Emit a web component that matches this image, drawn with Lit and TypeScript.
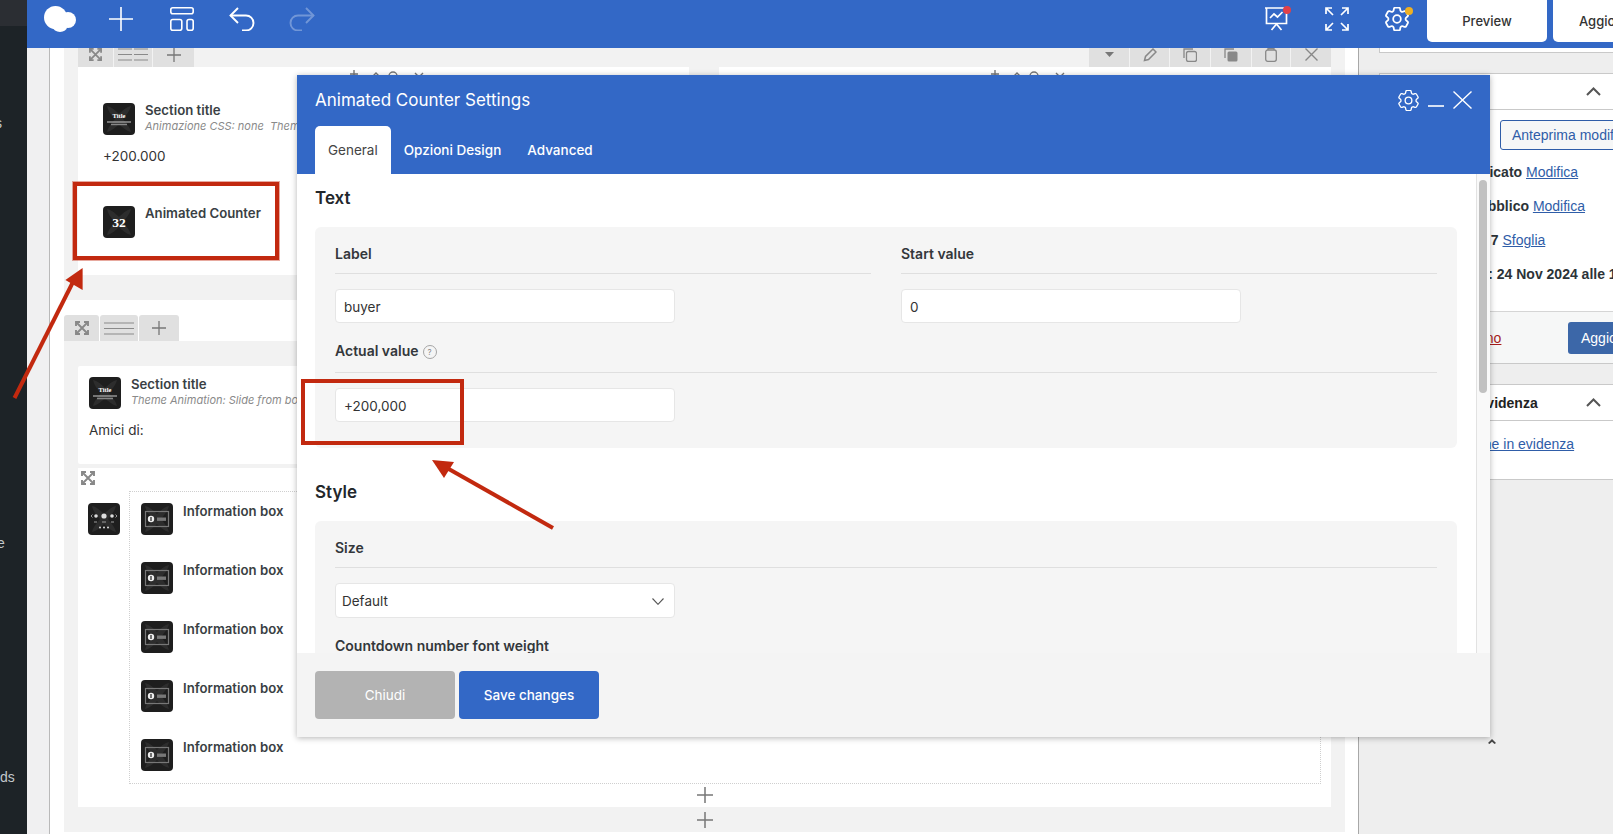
import { LitElement, html, css, svg } from "lit";
import { customElement } from "lit/decorators.js";

const gear = svg`<path d="M9.594 3.94c.09-.542.56-.94 1.11-.94h2.593c.55 0 1.02.398 1.11.94l.213 1.281c.063.374.313.686.645.87.074.04.147.083.22.127.325.196.72.257 1.075.124l1.217-.456a1.125 1.125 0 0 1 1.37.49l1.296 2.247a1.125 1.125 0 0 1-.26 1.431l-1.003.827c-.293.241-.438.613-.43.992a7.723 7.723 0 0 1 0 .255c-.008.378.137.75.43.991l1.004.827c.424.35.534.955.26 1.43l-1.298 2.247a1.125 1.125 0 0 1-1.369.491l-1.217-.456c-.355-.133-.75-.072-1.076.124a6.47 6.47 0 0 1-.22.128c-.331.183-.581.495-.644.869l-.213 1.281c-.09.543-.56.94-1.11.94h-2.594c-.55 0-1.019-.398-1.11-.94l-.213-1.281c-.062-.374-.312-.686-.644-.87a6.52 6.52 0 0 1-.22-.127c-.325-.196-.72-.257-1.076-.124l-1.217.456a1.125 1.125 0 0 1-1.369-.49l-1.297-2.247a1.125 1.125 0 0 1 .26-1.431l1.004-.827c.292-.24.437-.613.43-.991a6.932 6.932 0 0 1 0-.255c.007-.38-.138-.751-.43-.992l-1.004-.827a1.125 1.125 0 0 1-.26-1.43l1.297-2.247a1.125 1.125 0 0 1 1.37-.491l1.216.456c.356.133.751.072 1.076-.124.072-.044.146-.086.22-.128.332-.183.582-.495.644-.869l.214-1.28Z"/><path d="M15 12a3 3 0 1 1-6 0 3 3 0 0 1 6 0Z"/>`;

const gearIcon = (w: number, sw: number) => html`<svg width=${w} height=${w} viewBox="2.6 2.6 18.8 18.8" fill="none" stroke="#fff" stroke-width=${sw}>${gear}</svg>`;

const expandIcon = (s: number) => html`<svg width=${s} height=${s} viewBox="0 0 14 14" fill="none" stroke="#888" stroke-width="1.9"><path d="M1 5V1h4M9 1h4v4M13 9v4H9M5 13H1V9"/><path d="M1 1l12 12M13 1L1 13"/></svg>`;

const tileBg = svg`<rect width="32" height="32" rx="4" fill="#1e1e1e"/><path d="M4 3c5 1 9 5 12 8 3-3 7-7 12-8-1 5-5 9-8 13 3 4 7 8 8 13-5-1-9-5-12-8-3 3-7 7-12 8 1-5 5-9 8-13C8 12 5 8 4 3Z" fill="#2d2d2d"/>`;

const tileTitle = html`<svg class="tile" viewBox="0 0 32 32">${tileBg}<text x="16" y="15" text-anchor="middle" font-family="Liberation Serif" font-weight="700" font-size="6.5" fill="#fff">Title</text><path d="M4 19h24" stroke="#ccc" stroke-width="1"/><path d="M8 21.5h16" stroke="#888" stroke-width="1.4"/></svg>`;
const tileCount = html`<svg class="tile" viewBox="0 0 32 32">${tileBg}<text x="16" y="20.5" text-anchor="middle" font-family="Liberation Serif" font-weight="700" font-size="13.5" fill="#fff">32</text></svg>`;
const tileInfo = html`<svg class="tile" viewBox="0 0 32 32">${tileBg}<rect x="4.5" y="8.5" width="23" height="15" fill="none" stroke="#777" stroke-width="1.2"/><rect x="16" y="14.5" width="9" height="3.4" fill="#777"/><circle cx="10" cy="16" r="3.2" fill="#eee"/><rect x="9.4" y="14" width="1.2" height="4" fill="#222"/></svg>`;
const tileBundle = html`<svg class="tile" viewBox="0 0 32 32">${tileBg}<g fill="#ddd"><circle cx="16" cy="13" r="2.6"/><circle cx="8" cy="13" r="1.8"/><circle cx="24" cy="13" r="1.8"/><circle cx="12" cy="24.5" r="1"/><circle cx="16" cy="24.5" r="1"/><circle cx="20" cy="24.5" r="1"/></g><path d="M3 13l1.5-1.5M3 13l1.5 1.5M29 13l-1.5-1.5M29 13l-1.5 1.5M6 19h3M14 19h4M23 19h3" stroke="#bbb" stroke-width=".8"/></svg>`;

const miniCtrls = html`<svg class="mini" width="90" height="8" viewBox="0 0 90 8" fill="none" stroke="#777" stroke-width="1.4"><path d="M15 0v8M11 4h8"/><path d="M33 7l4-4 4 4"/><circle cx="54" cy="6" r="4"/><path d="M76 3l4 4M84 3l-4 4"/></svg>`;

@customElement("app-root")
export class AppRoot extends LitElement {
  static styles = css`
    :host { display: block; position: relative; width: 1613px; height: 834px; overflow: hidden; font-family: Inter, "Liberation Sans", sans-serif; color: #2b2f33; background: #fff; }
    * { box-sizing: border-box; }
    svg { display: block; flex: none; }
    .app { display: flex; height: 834px; }
    .side { width: 27px; flex: none; background: #1d2327; color: #c3c8cc; font-size: 14px; line-height: 20px; overflow: hidden; font-family: "Liberation Sans", sans-serif; }
    .side-top { height: 26px; background: #2b2e33; }
    .side div.s1 { margin: 87px 0 0 -5px; }
    .side div.s2 { margin: 400px 0 0 -3px; }
    .side div.s3 { margin: 214px 0 0 0; }
    .main { flex: 1; display: flex; flex-direction: column; min-width: 0; }
    .topbar { height: 48px; flex: none; background: #3368c6; display: flex; align-items: flex-start; position: relative; }
    .top-left { display: flex; align-items: center; height: 37px; padding-left: 17px; }
    .logo { margin-right: 33px; }
    .t-plus { margin-right: 37px; }
    .t-layout { margin-right: 35px; }
    .t-undo { margin-right: 34px; }
    .top-right { margin-left: auto; display: flex; align-items: flex-start; }
    .t-icons { display: flex; align-items: center; height: 37px; }
    .t-pres { margin-right: 37px; }
    .t-full { margin-right: 36px; }
    .t-gear { margin-right: 18px; }
    .dotwrap { position: relative; }
    .dot { position: absolute; width: 8px; height: 8px; border-radius: 50%; }
    .dot.red { background: #e0404a; right: -3px; top: 0; }
    .dot.orange { background: #eeb023; right: -4px; top: 0; }
    .tbtn { width: 120px; height: 42px; background: #fff; border-radius: 0 0 5px 5px; font-size: 13px; font-weight: 500; display: flex; align-items: center; justify-content: center; color: #333; }
    .tbtn.next { width: 60px; margin-left: 6px; justify-content: flex-start; padding-left: 26px; border-radius: 0 0 0 5px; white-space: nowrap; overflow: hidden; }
    .body { flex: 1; display: flex; min-height: 0; }
    .gutter { width: 22px; flex: none; background: #f0f0f1; }
    .canvas { width: 1310px; flex: none; background: #fff; border-left: 1px solid #b9b9b9; border-right: 1px solid #a8a8a8; padding: 0 13px 0 14px; }
    .sec1 { height: 252px; background: #f2f2f2; padding: 0 14px; display: flex; justify-content: space-between; }
    .col { width: 611px; }
    .col.c2 { width: 612px; }
    .bar { height: 19px; display: flex; }
    .bar.right { justify-content: flex-end; }
    .seg { background: #e0e0e0; margin-right: 1px; display: flex; align-items: center; justify-content: center; padding-bottom: 6px; }
    .seg:last-child { margin-right: 0; }
    .colbody { height: 208px; background: #fff; overflow: hidden; padding-top: 3px; }
    .mini { margin: 0 auto; }
    .el { display: flex; gap: 10px; padding-left: 25px; }
    .el.first { margin-top: 25px; }
    .el.second { margin-top: 40px; }
    .tile { width: 32px; height: 32px; flex: none; }
    .el-title { font-size: 13.2px; font-weight: 600; line-height: 16px; color: #3a3f44; white-space: nowrap; margin-top: -1px; }
    .el-sub { font-size: 11px; font-style: italic; line-height: 16px; color: #8a8a8a; white-space: nowrap; }
    .el-text { font-size: 13.5px; line-height: 20px; padding-left: 25px; margin-top: 11px; color: #333; }
    .tabs { height: 26px; display: flex; margin-top: 15px; }
    .tabs .seg { padding-bottom: 0; border-radius: 3px 3px 0 0; margin-right: 1px; }
    .sec2 { height: 491px; background: #f2f2f2; padding: 25px 14px 0; }
    .card1 { height: 98px; background: #fff; padding: 11px; overflow: hidden; border-radius: 2px; }
    .card1 .el { padding-left: 0; }
    .card1 .el-text { padding-left: 0; }
    .card2 { height: 339px; margin-top: 4px; background: #fff; padding: 3px 0 0; }
    .exp { margin-left: 3px; }
    .ct { display: flex; margin-top: 6px; padding-left: 10px; }
    .bundle { margin-top: 12px; }
    .dotted { margin-left: 9px; width: 1192px; height: 293px; border: 1px dotted #cfcfcf; padding: 11px 0 0 11px; display: flex; flex-direction: column; gap: 27px; }
    .dotted .el { padding-left: 0; }
    .dotted .el-title { margin-top: 0; }
    .plus1 { margin: 3px auto 0; }
    .plus2 { margin: 5px auto 0; }
    .panel { flex: 1; background: #eeeeee; overflow: hidden; padding-left: 20px; font-family: "Liberation Sans", sans-serif; font-size: 14px; }
    .box { width: 280px; background: #fff; border: 1px solid #c9c9c9; border-right: 0; }
    .box0 { height: 5px; border-top: 0; }
    .box1 { margin-top: 20px; height: 291px; }
    .box-h { height: 36px; border-bottom: 1px solid #c9c9c9; position: relative; font-size: 14px; font-weight: 700; color: #222; line-height: 36px; }
    .chev { position: absolute; left: 206px; top: 13px; }
    .meta { padding-top: 10px; height: 201px; }
    .prev { margin-left: 120px; width: 170px; height: 30px; border: 1px solid #2f5da8; border-radius: 3px; background: #f6f7f7; color: #2f5da8; padding-left: 11px; line-height: 28px; white-space: nowrap; overflow: hidden; }
    .row { font-weight: 700; white-space: nowrap; height: 34px; line-height: 34px; color: #2c3338; }
    .row.r1 { margin-top: 5px; padding-left: 27px; }
    .row.r2 { padding-left: 24px; }
    .row.r3 { padding-left: 40px; }
    .row.r4 { padding-left: 25px; }
    a { color: #2f5da8; text-decoration: underline; font-weight: 400; }
    .foot { height: 52px; background: #f6f7f7; border-top: 1px solid #d5d5d5; display: flex; align-items: center; }
    .trash { color: #a61c1c; text-decoration: underline; font-weight: 400; margin-left: 7px; width: 181px; flex: none; white-space: nowrap; }
    .upd { background: #3c67a8; color: #fff; width: 90px; height: 32px; border-radius: 3px; font-weight: 500; font-size: 14px; padding-left: 13px; line-height: 32px; }
    .box2 { margin-top: 20px; height: 96px; }
    .b2h { padding-left: 13px; white-space: nowrap; }
    .b2l { padding: 15px 0 0 5px; white-space: nowrap; }

    .modal { position: absolute; left: 297px; top: 75px; width: 1193px; height: 662px; display: flex; flex-direction: column; background: #fff; box-shadow: 0 1px 6px rgba(0,0,0,.3); }
    .m-head { height: 99px; flex: none; background: #3368c6; color: #fff; }
    .m-top { height: 51px; padding: 0 18px 1px; display: flex; align-items: center; }
    .m-title { font-size: 17px; font-weight: 400; }
    .m-ic { margin-left: auto; display: flex; align-items: center; }
    .m-min { margin-left: 9px; }
    .m-x { margin-left: 9px; }
    .m-tabs { height: 48px; padding-left: 18px; display: flex; font-size: 13.5px; font-weight: 500; }
    .m-tab { padding: 0 13px; display: flex; align-items: center; }
    .m-tab.on { background: #fff; color: #444; border-radius: 5px 5px 0 0; font-weight: 400; }
    .m-body { flex: 1; position: relative; overflow: hidden; min-height: 0; padding: 12px 33px 0 18px; }
    .track { position: absolute; right: 0; top: 0; bottom: 0; width: 14px; background: #f9f9f9; border-left: 1px solid #e2e2e2; }
    .thumb { margin: 6px 0 0 2px; width: 8px; height: 213px; border-radius: 4px; background: #c1c1c1; }
    h3 { font-size: 17px; line-height: 24px; font-weight: 600; margin: 0 0 17px; color: #23272b; }
    h3.next { margin-top: 32px; }
    .mcard { background: #f5f5f5; border-radius: 6px; padding: 17px 20px 26px; }
    .two { display: grid; grid-template-columns: 536px 536px; gap: 30px; }
    .lab { font-size: 14px; font-weight: 600; line-height: 20px; padding-bottom: 9px; border-bottom: 1px solid #dfdfdf; color: #33373b; display: flex; align-items: center; gap: 4px; }
    .lab.tall { line-height: 24px; height: 34px; margin-top: 16px; }
    .inp { width: 340px; height: 34px; margin-top: 15px; background: #fff; border: 1px solid #e6e6e6; border-radius: 4px; padding: 1px 0 0 8px; font-size: 13.5px; line-height: 32px; color: #333; }
    .sel { height: 35px; padding: 1px 10px 0 6px; display: flex; align-items: center; justify-content: space-between; }
    .lab.plain { border: 0; margin-top: 18px; }
    .help { width: 14px; height: 14px; border: 1px solid #a5a5a5; border-radius: 50%; font-size: 8px; font-weight: 400; line-height: 12px; text-align: center; color: #888; margin-top: 2px; }
    .m-foot { height: 84px; flex: none; background: #f4f4f4; padding: 18px; display: flex; gap: 4px; }
    .btn { width: 140px; height: 48px; border-radius: 4px; color: #fff; font-size: 13.5px; font-weight: 500; display: flex; align-items: center; justify-content: center; background: #3368c6; }
    .btn.grey { background: #b3b3b3; font-weight: 400; }

    .ann { position: absolute; border: 4px solid #c2290f; pointer-events: none; }
    .ann.a1 { left: 73px; top: 182px; width: 206px; height: 78px; box-shadow: 0 0 0 1px rgba(194,41,15,.4); }
    .ann.a2 { left: 301px; top: 379px; width: 163px; height: 66px; }
    .arrows { position: absolute; left: 0; top: 0; pointer-events: none; }
  `;

  render() {
    const seg = (w: number, icon: unknown) => html`<div class="seg" style="width:${w}px">${icon}</div>`;
    const lines = html`<svg width="30" height="13" viewBox="0 0 30 13" fill="none" stroke="#8a8a8a" stroke-width="1.2"><path d="M0 1h14M0 6.5h14M0 12h14M16 1h14M16 6.5h14M16 12h14"/></svg>`;
    const plusS = (s: number, cls = "") => html`<svg class=${cls} width=${s} height=${s} viewBox="0 0 16 16" fill="none" stroke="#777" stroke-width="1.5"><path d="M8 0v16M0 8h16"/></svg>`;
    const infoRow = html`<div class="el">${tileInfo}<div class="el-title">Information box</div></div>`;
    return html`
      <div class="app">
        <aside class="side">
          <div class="side-top"></div>
          <div class="s1">s</div>
          <div class="s2">e</div>
          <div class="s3">ds</div>
        </aside>
        <div class="main">
          <header class="topbar">
            <div class="top-left">
              <svg class="logo" width="32" height="26" viewBox="0 0 32 26" fill="#fff"><circle cx="11.5" cy="11.5" r="11.5"/><circle cx="24" cy="14" r="8"/><ellipse cx="16" cy="21" rx="7" ry="5"/></svg>
              <svg class="t-plus" width="24" height="24" viewBox="0 0 24 24" fill="none" stroke="#fff" stroke-width="1.6"><path d="M12 0v24M0 12h24"/></svg>
              <svg class="t-layout" width="24" height="24" viewBox="0 0 24 24" fill="none" stroke="#fff" stroke-width="1.6"><rect x=".8" y=".8" width="22.4" height="6" rx="2"/><rect x=".8" y="12.5" width="11" height="10.7" rx="2"/><rect x="17" y="12.5" width="6.2" height="10.7" rx="2"/></svg>
              <svg class="t-undo" width="26" height="24" viewBox="0 0 26 24" fill="none" stroke="#fff" stroke-width="1.9"><path d="M9 1L1.5 8.5 9 16"/><path d="M1.5 8.5H17a7.5 7.5 0 0 1 0 15h-4"/></svg>
              <svg width="26" height="24" viewBox="0 0 26 24" fill="none" stroke="#fff" stroke-width="1.9" opacity=".3"><path d="M17 1l7.5 7.5L17 16"/><path d="M24.5 8.5H9a7.5 7.5 0 0 0 0 15h4"/></svg>
            </div>
            <div class="top-right">
              <div class="t-icons">
                <div class="dotwrap t-pres">
                  <svg width="23" height="26" viewBox="0 0 23 26" fill="none" stroke="#fff" stroke-width="1.7"><path d="M0 2h23M1.5 2v15.5h20V2"/><path d="M5 12l4-4 3.5 3 5-5"/><path d="M11.5 18l-5 6M11.5 18l5 6"/></svg>
                  <span class="dot red"></span>
                </div>
                <svg class="t-full" width="24" height="24" viewBox="0 0 24 24" fill="none" stroke="#fff" stroke-width="1.7"><path d="M1 7V1h6M1 1l7 7M17 1h6v6M23 1l-7 7M23 17v6h-6M23 23l-7-7M7 23H1v-6M1 23l7-7"/></svg>
                <div class="dotwrap t-gear">${gearIcon(24, 1.4)}<span class="dot orange"></span></div>
              </div>
              <div class="tbtn">Preview</div>
              <div class="tbtn next">Aggiorna</div>
            </div>
          </header>
          <div class="body">
            <div class="gutter"></div>
            <div class="canvas">
              <div class="sec1">
                <div class="col">
                  <div class="bar">
                    ${seg(35, expandIcon(13))}
                    ${seg(38, lines)}
                    ${seg(41, plusS(14))}
                  </div>
                  <div class="colbody">
                    ${miniCtrls}
                    <div class="el first">${tileTitle}<div><div class="el-title">Section title</div><div class="el-sub">Animazione CSS: none&nbsp; Theme Animation: none</div></div></div>
                    <div class="el-text">+200.000</div>
                    <div class="el second">${tileCount}<div class="el-title">Animated Counter</div></div>
                  </div>
                </div>
                <div class="col c2">
                  <div class="bar right">
                    ${seg(40, html`<svg width="9" height="5" viewBox="0 0 9 5" fill="#777"><path d="M0 0h9L4.5 5Z"/></svg>`)}
                    ${seg(39, html`<svg width="14" height="14" viewBox="0 0 14 14" fill="none" stroke="#888" stroke-width="1.5"><path d="M1.5 12.5l1-4L10 1l3 3-7.5 7.5Z"/></svg>`)}
                    ${seg(40, html`<svg width="14" height="14" viewBox="0 0 14 14" fill="none" stroke="#888" stroke-width="1.3"><rect x="3.5" y="3.5" width="10" height="10" rx="2"/><path d="M1 10V1h9"/></svg>`)}
                    ${seg(40, html`<svg width="14" height="14" viewBox="0 0 14 14" fill="#888"><rect x="3.5" y="3.5" width="10" height="10" rx="1.5"/><path d="M1 10V1h9" fill="none" stroke="#888" stroke-width="1.3"/></svg>`)}
                    ${seg(38, html`<svg width="12" height="14" viewBox="0 0 12 14" fill="none" stroke="#888" stroke-width="1.3"><rect x=".7" y="2" width="10.6" height="11.3" rx="2"/><path d="M3 2V.7h6V2"/></svg>`)}
                    ${seg(40, html`<svg width="13" height="13" viewBox="0 0 13 13" fill="none" stroke="#888" stroke-width="1.4"><path d="M.5.5l12 12M12.5.5l-12 12"/></svg>`)}
                  </div>
                  <div class="colbody">${miniCtrls}</div>
                </div>
              </div>
              <div class="tabs">
                ${seg(35, expandIcon(14))}
                ${seg(38, html`<svg width="30" height="13" viewBox="0 0 30 13" fill="none" stroke="#8a8a8a" stroke-width="1.2"><path d="M0 1h30M0 6.5h30M0 12h30"/></svg>`)}
                ${seg(40, plusS(14))}
              </div>
              <div class="sec2">
                <div class="card1">
                  <div class="el">${tileTitle}<div><div class="el-title">Section title</div><div class="el-sub">Theme Animation: Slide from bottom</div></div></div>
                  <div class="el-text">Amici di:</div>
                </div>
                <div class="card2">
                  <div class="exp">${expandIcon(14)}</div>
                  <div class="ct">
                    <div class="bundle">${tileBundle}</div>
                    <div class="dotted">${infoRow}${infoRow}${infoRow}${infoRow}${infoRow}</div>
                  </div>
                  ${plusS(16, "plus1")}
                </div>
                ${plusS(16, "plus2")}
              </div>
            </div>
            <aside class="panel">
              <div class="box box0"></div>
              <div class="box box1">
                <div class="box-h"><svg class="chev" width="15" height="9" viewBox="0 0 15 9" fill="none" stroke="#555" stroke-width="2"><path d="M1 8l6.5-6.5L14 8"/></svg></div>
                <div class="meta">
                  <div class="prev">Anteprima modifiche</div>
                  <div class="row r1">Stato: Pubblicato <a>Modifica</a></div>
                  <div class="row r2">Visibilità: Pubblico <a>Modifica</a></div>
                  <div class="row r3">Revisioni: 7 <a>Sfoglia</a></div>
                  <div class="row r4">Pubblicato il: 24 Nov 2024 alle 16:30</div>
                </div>
                <div class="foot"><span class="trash">Sposta nel cestino</span><div class="upd">Aggiorna</div></div>
              </div>
              <div class="box box2">
                <div class="box-h b2h">Immagine in evidenza<svg class="chev" width="15" height="9" viewBox="0 0 15 9" fill="none" stroke="#555" stroke-width="2"><path d="M1 8l6.5-6.5L14 8"/></svg></div>
                <div class="b2l"><a>Imposta immagine in evidenza</a></div>
              </div>
            </aside>
          </div>
        </div>
      </div>

      <section class="modal">
        <div class="m-head">
          <div class="m-top">
            <div class="m-title">Animated Counter Settings</div>
            <div class="m-ic">
              ${gearIcon(21, 1.2)}
              <svg class="m-min" width="16" height="16" viewBox="0 0 16 16" stroke="#fff" stroke-width="1.6"><path d="M0 14h16"/></svg>
              <svg class="m-x" width="19" height="18" viewBox="0 0 19 18" fill="none" stroke="#fff" stroke-width="1.4"><path d="M.5.5l18 17M18.5.5l-18 17"/></svg>
            </div>
          </div>
          <div class="m-tabs">
            <div class="m-tab on">General</div>
            <div class="m-tab">Opzioni Design</div>
            <div class="m-tab">Advanced</div>
          </div>
        </div>
        <div class="m-body">
          <h3>Text</h3>
          <div class="mcard">
            <div class="two">
              <div><div class="lab">Label</div><div class="inp">buyer</div></div>
              <div><div class="lab">Start value</div><div class="inp">0</div></div>
            </div>
            <div class="lab tall">Actual value <span class="help">?</span></div>
            <div class="inp">+200,000</div>
          </div>
          <h3 class="next">Style</h3>
          <div class="mcard">
            <div class="lab">Size</div>
            <div class="inp sel">Default<svg width="12" height="7" viewBox="0 0 12 7" fill="none" stroke="#555" stroke-width="1.1"><path d="M.5.5L6 6.3 11.5.5"/></svg></div>
            <div class="lab plain">Countdown number font weight</div>
          </div>
          <div class="track"><div class="thumb"></div></div>
        </div>
        <div class="m-foot">
          <div class="btn grey">Chiudi</div>
          <div class="btn">Save changes</div>
        </div>
      </section>

      <div class="ann a1"></div>
      <div class="ann a2"></div>
      <svg class="arrows" width="1613" height="834" viewBox="0 0 1613 834" fill="#c2290f" stroke="none">
        <path d="M14.5 398L75 278" stroke="#c2290f" stroke-width="4"/>
        <path d="M82.6 268L65.4 280 82.6 290Z"/>
        <path d="M447 468L553 528" stroke="#c2290f" stroke-width="4"/>
        <path d="M432 460L444 478 454 462Z"/>
        <path d="M1488 743l4-4 4 4-1.5 1-2.5-2.3-2.5 2.3Z" fill="#444"/>
      </svg>
    `;
  }
}
